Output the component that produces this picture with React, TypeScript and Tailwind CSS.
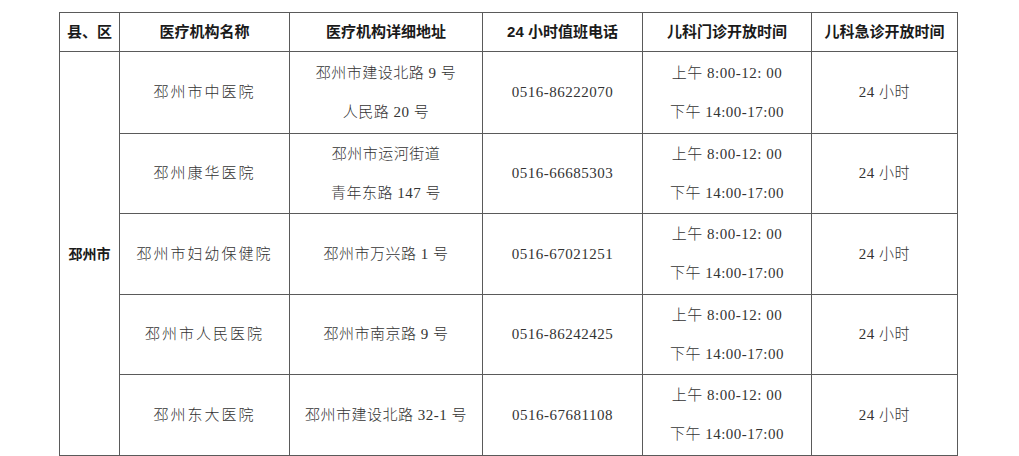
const rows = [
  { name: "邳州市中医院", addr: ["邳州市建设北路 9 号", "人民路 20 号"], phone: "0516-86222070", h: "h-[82px]" },
  { name: "邳州康华医院", addr: ["邳州市运河街道", "青年东路 147 号"], phone: "0516-66685303", h: "h-[80px]" },
  { name: "邳州市妇幼保健院", addr: ["邳州市万兴路 1 号"], phone: "0516-67021251", h: "h-[81px]" },
  { name: "邳州市人民医院", addr: ["邳州市南京路 9 号"], phone: "0516-86242425", h: "h-[80px]" },
  { name: "邳州东大医院", addr: ["邳州市建设北路 32-1 号"], phone: "0516-67681108", h: "h-[81px]" },
];

const headers = ["县、区", "医疗机构名称", "医疗机构详细地址", "24 小时值班电话", "儿科门诊开放时间", "儿科急诊开放时间"];
const widths = ["w-[60px]", "w-[170px]", "w-[193px]", "w-[160px]", "w-[169px]", "w-[146px]"];

const cell = "border border-[#5a5a5a] p-0 text-center align-middle";
const body = "font-['Liberation_Serif','Noto_Sans_CJK_SC',serif] text-[15px] font-light leading-[39px] text-[#333] tracking-[0.5px]";

export default function App() {
  return (
    <div className="min-h-[456px] w-[1019px] bg-white pl-[59px] pt-[12px]">
      <table className="w-[898px] table-fixed border-collapse">
        <colgroup>
          {widths.map((w) => (
            <col key={w} className={w} />
          ))}
        </colgroup>
        <thead>
          <tr className="h-[39px]">
            {headers.map((h) => (
              <th
                key={h}
                className={`${cell} h-[39px] font-['Liberation_Sans','Noto_Sans_CJK_SC',sans-serif] text-[15px] leading-[20px] font-semibold text-[#1a1a1a]`}
              >
                {h}
              </th>
            ))}
          </tr>
        </thead>
        <tbody>
          {rows.map((r, i) => (
            <tr key={r.name} className={r.h}>
              {i === 0 && (
                <td
                  rowSpan={5}
                  className={`${cell} font-['Noto_Sans_CJK_SC',sans-serif] text-[14px] font-bold text-[#1a1a1a]`}
                >
                  邳州市
                </td>
              )}
              <td className={`${cell} ${body} tracking-[2px]`}>{r.name}</td>
              <td className={`${cell} ${body}`}>
                {r.addr.map((a) => (
                  <div key={a}>{a}</div>
                ))}
              </td>
              <td className={`${cell} ${body}`}>{r.phone}</td>
              <td className={`${cell} ${body}`}>
                <div>上午 8:00-12: 00</div>
                <div>下午 14:00-17:00</div>
              </td>
              <td className={`${cell} ${body}`}>24 小时</td>
            </tr>
          ))}
        </tbody>
      </table>
    </div>
  );
}
